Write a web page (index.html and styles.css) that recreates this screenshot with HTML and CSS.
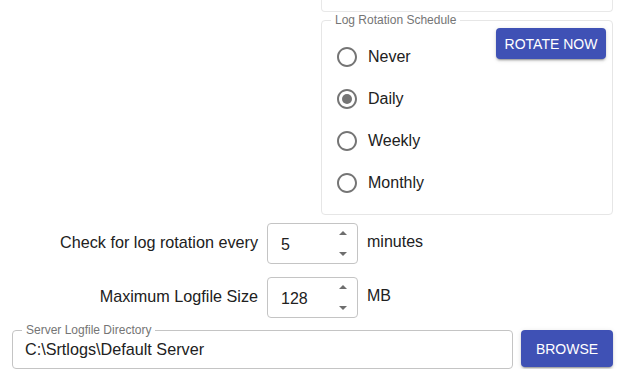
FILE: index.html
```html
<!DOCTYPE html>
<html>
<head>
  <title>Log Settings</title>
  <link rel="stylesheet" href="styles.css">
</head>
<body>
  <div class="top-card"></div>

  <fieldset class="schedule">
    <legend>Log Rotation Schedule</legend>
    <div class="schedule-body">
      <div class="radio-group">
        <label class="radio">
          <svg viewBox="0 0 24 24"><path d="M12 2C6.48 2 2 6.48 2 12s4.48 10 10 10 10-4.48 10-10S17.52 2 12 2zm0 18c-4.42 0-8-3.58-8-8s3.58-8 8-8 8 3.58 8 8-3.58 8-8 8z"/></svg>
          <span>Never</span>
        </label>
        <label class="radio">
          <svg viewBox="0 0 24 24"><path d="M12 2C6.48 2 2 6.48 2 12s4.48 10 10 10 10-4.48 10-10S17.52 2 12 2zm0 18c-4.42 0-8-3.58-8-8s3.58-8 8-8 8 3.58 8 8-3.58 8-8 8z"/><circle cx="12" cy="12" r="5"/></svg>
          <span>Daily</span>
        </label>
        <label class="radio">
          <svg viewBox="0 0 24 24"><path d="M12 2C6.48 2 2 6.48 2 12s4.48 10 10 10 10-4.48 10-10S17.52 2 12 2zm0 18c-4.42 0-8-3.58-8-8s3.58-8 8-8 8 3.58 8 8-3.58 8-8 8z"/></svg>
          <span>Weekly</span>
        </label>
        <label class="radio">
          <svg viewBox="0 0 24 24"><path d="M12 2C6.48 2 2 6.48 2 12s4.48 10 10 10 10-4.48 10-10S17.52 2 12 2zm0 18c-4.42 0-8-3.58-8-8s3.58-8 8-8 8 3.58 8 8-3.58 8-8 8z"/></svg>
          <span>Monthly</span>
        </label>
      </div>
      <button class="btn rotate-btn">Rotate Now</button>
    </div>
  </fieldset>

  <div class="settings">
    <div class="setting-label">Check for log rotation every</div>
    <div class="num-box">
      <span class="num-value">5</span>
      <span class="spinner"><i class="up"></i><i class="down"></i></span>
    </div>
    <div class="unit">minutes</div>

    <div class="setting-label">Maximum Logfile Size</div>
    <div class="num-box">
      <span class="num-value">128</span>
      <span class="spinner"><i class="up"></i><i class="down"></i></span>
    </div>
    <div class="unit">MB</div>
  </div>

  <div class="dir-row">
    <fieldset class="dir-field">
      <legend>Server Logfile Directory</legend>
      <div class="dir-value">C:\Srtlogs\Default Server</div>
    </fieldset>
    <button class="btn browse-btn">Browse</button>
  </div>
</body>
</html>
```

FILE: styles.css
```css
body {
  margin: 0;
  font-family: "Liberation Sans", Arial, sans-serif;
  color: #212121;
  background: #fff;
}
.top-card {
  margin-left: 321px;
  width: 290px;
  height: 11px;
  border: 1px solid #e8e8e8;
  border-top: none;
  border-radius: 0 0 4px 4px;
}
.schedule {
  margin: 2px 0 0 321px;
  width: 290px;
  padding: 0 0 10px 0;
  border: 1px solid #e6e6e6;
  border-radius: 4px;
  box-sizing: content-box;
}
.schedule legend,
.dir-field legend {
  font-size: 12px;
  line-height: 13px;
  color: #757575;
  padding: 0 4px;
}
.schedule legend {
  margin-left: 9px;
}
.schedule-body {
  display: flex;
  justify-content: space-between;
  align-items: flex-start;
}
.radio-group {
  padding: 9px 0 0 13px;
  display: flex;
  flex-direction: column;
}
.radio {
  display: flex;
  align-items: center;
  height: 42px;
  font-size: 16px;
}
.radio svg {
  width: 24px;
  height: 24px;
  fill: #757575;
  margin-right: 9px;
}
.btn {
  background: #3f51b5;
  color: #fff;
  border: none;
  border-radius: 4px;
  font-family: "Liberation Sans", Arial, sans-serif;
  font-size: 14px;
  text-transform: uppercase;
  box-shadow: 0 3px 1px -2px rgba(0,0,0,0.2), 0 2px 2px 0 rgba(0,0,0,0.14), 0 1px 5px 0 rgba(0,0,0,0.12);
  cursor: pointer;
}
.rotate-btn {
  margin: 1px 6px 0 0;
  width: 110px;
  height: 31px;
}
.settings {
  margin-top: 8px;
  display: grid;
  grid-template-columns: 258px 91px auto;
  column-gap: 9px;
  row-gap: 13px;
  align-items: center;
}
.setting-label {
  text-align: right;
  font-size: 16.2px;
  margin-top: -3px;
}
.unit {
  font-size: 16px;
  margin-top: -3px;
}
.num-box {
  height: 41px;
  box-sizing: border-box;
  border: 1px solid #c4c4c4;
  border-radius: 4px;
  display: flex;
  align-items: center;
  justify-content: space-between;
  padding: 0 10px 0 13px;
  font-size: 16px;
}
.num-value {
  padding-top: 2px;
}
.spinner {
  display: flex;
  flex-direction: column;
  justify-content: space-between;
  height: 25px;
}
.spinner i {
  width: 0;
  height: 0;
  border-left: 4px solid transparent;
  border-right: 4px solid transparent;
}
.spinner .up {
  border-bottom: 4px solid #6e6e6e;
}
.spinner .down {
  border-top: 4px solid #6e6e6e;
}
.dir-row {
  margin: 6px 11px 0 12px;
  display: flex;
  align-items: flex-start;
  gap: 8px;
}
.dir-field {
  flex: 1;
  margin: 0;
  padding: 2px 12px 9px 12px;
  border: 1px solid #c4c4c4;
  border-radius: 4px;
}
.dir-field legend {
  margin-left: -3px;
}
.dir-value {
  font-size: 16.2px;
  line-height: 20px;
}
.browse-btn {
  margin-top: 6px;
  width: 92px;
  height: 37px;
}
```
